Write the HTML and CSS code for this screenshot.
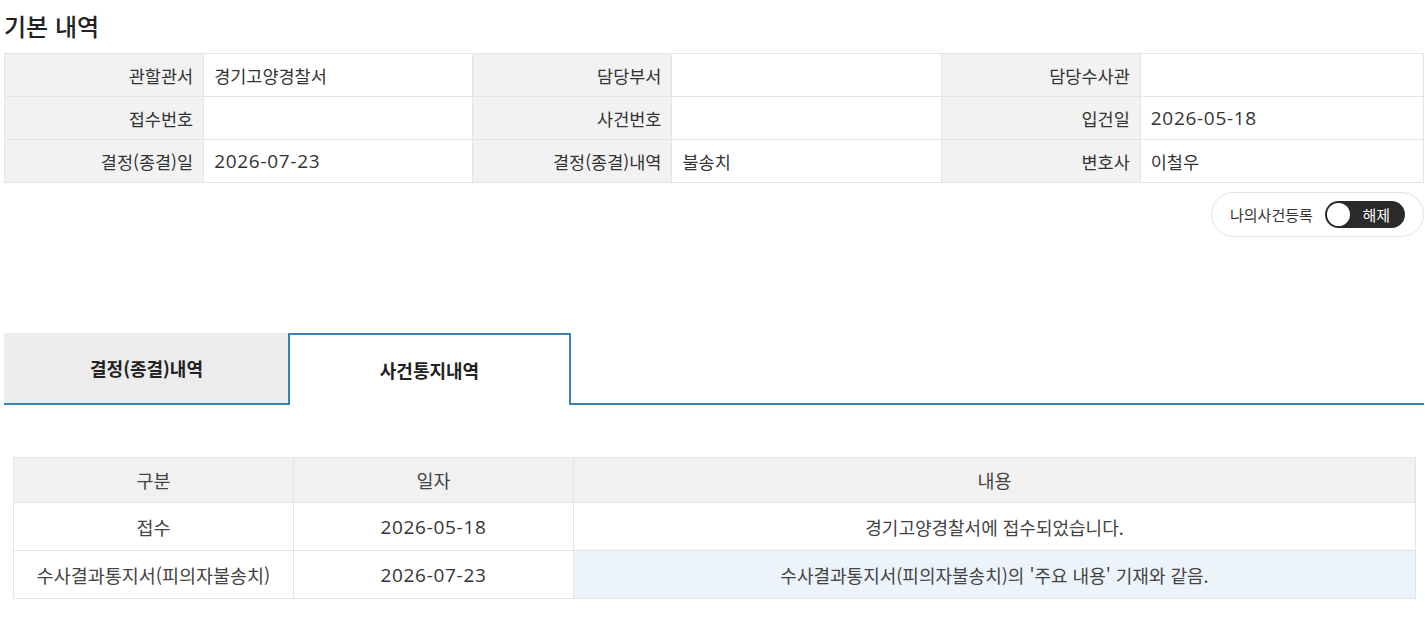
FILE: index.html
```html
<!DOCTYPE html>
<html lang="ko">
<head>
  <meta charset="UTF-8">
  <meta name="viewport" content="width=device-width, initial-scale=1.0">
  <title>사건 조회</title>
  <link rel="stylesheet" href="styles.css">
</head>
<body>

<div class="page">
  <h2 class="section-title">기본 내역</h2>

  <table class="info-table">
    <colgroup>
      <col class="col-label"><col class="col-value">
      <col class="col-label"><col class="col-value">
      <col class="col-label"><col class="col-value-wide">
    </colgroup>
    <tr>
      <th>관할관서</th><td>경기고양경찰서</td>
      <th>담당부서</th><td></td>
      <th>담당수사관</th><td></td>
    </tr>
    <tr>
      <th>접수번호</th><td></td>
      <th>사건번호</th><td></td>
      <th>입건일</th><td><span class="num">2026-05-18</span></td>
    </tr>
    <tr>
      <th>결정(종결)일</th><td><span class="num">2026-07-23</span></td>
      <th>결정(종결)내역</th><td>불송치</td>
      <th>변호사</th><td>이철우</td>
    </tr>
  </table>

  <div class="my-case">
    <div class="my-case-box">
      <span class="my-case-label">나의사건등록</span>
      <button class="switch" type="button">
        <span class="switch-knob"></span>
        <span class="switch-text">해제</span>
      </button>
    </div>
  </div>

  <div class="tabs">
    <a class="tab" href="#">결정(종결)내역</a>
    <a class="tab active" href="#">사건통지내역</a>
  </div>

  <table class="notice-table">
    <colgroup>
      <col class="col-type"><col class="col-date"><col>
    </colgroup>
    <thead>
      <tr><th>구분</th><th>일자</th><th>내용</th></tr>
    </thead>
    <tbody>
      <tr>
        <td>접수</td>
        <td><span class="num">2026-05-18</span></td>
        <td class="content">경기고양경찰서에 접수되었습니다.</td>
      </tr>
      <tr>
        <td>수사결과통지서(피의자불송치)</td>
        <td><span class="num">2026-07-23</span></td>
        <td class="content highlight">수사결과통지서(피의자불송치)의 '주요 내용' 기재와 같음.</td>
      </tr>
    </tbody>
  </table>
</div>

</body>
</html>
```

FILE: styles.css
```css
body {
  margin: 0;
  padding: 0;
  background-color: #ffffff;
  color: #333;
  font-family: "Noto Sans CJK KR", "Noto Sans", sans-serif;
}

.page {
  width: 1420px;
  padding-left: 4px;
}

.section-title {
  margin: 0;
  padding-top: 10px;
  height: 53px;
  box-sizing: border-box;
  font-size: 24px;
  font-weight: 500;
  line-height: 32px;
  color: #222;
}

/* dates and numbers use a wider latin face */
.num {
  font-family: "Open Sans", "Noto Sans", sans-serif;
  font-size: 19px;
  letter-spacing: 0.7px;
  color: #333;
}

/* basic info grid */
.info-table {
  width: 1420px;
  border-collapse: collapse;
  table-layout: fixed;
  font-size: 17.5px;
}

.info-table .col-label { width: 199px; }
.info-table .col-value { width: 269px; }
.info-table .col-value-wide { width: 283px; }

.info-table th,
.info-table td {
  height: 42px;
  padding: 0 10px;
  border: 1px solid #e4e4e4;
  font-weight: 400;
  color: #333;
}

.info-table th {
  background-color: #f2f2f2;
  text-align: right;
}

.info-table td {
  background-color: #ffffff;
  text-align: left;
}

/* my case toggle */
.my-case {
  display: flex;
  justify-content: flex-end;
  margin-top: 9px;
}

.my-case-box {
  display: flex;
  align-items: center;
  gap: 12px;
  width: 213px;
  height: 45px;
  box-sizing: border-box;
  padding: 0 18px;
  border: 1px solid #e2e2e2;
  border-radius: 23px;
  background-color: #fff;
}

.my-case-label {
  font-size: 15px;
  color: #333;
  white-space: nowrap;
}

.switch {
  display: flex;
  align-items: center;
  flex-shrink: 0;
  width: 80px;
  height: 27px;
  padding: 0 2px;
  border: none;
  border-radius: 14px;
  background-color: #2a2a2a;
  cursor: pointer;
}

.switch-knob {
  width: 23px;
  height: 23px;
  border-radius: 50%;
  background-color: #fff;
}

.switch-text {
  flex: 1;
  text-align: center;
  font-family: "Noto Sans CJK KR", sans-serif;
  font-size: 15px;
  color: #fff;
}

/* tabs */
.tabs {
  display: flex;
  margin-top: 96px;
  border-bottom: 2px solid #3684ad;
}

.tab {
  display: flex;
  align-items: center;
  justify-content: center;
  width: 285px;
  height: 70px;
  box-sizing: border-box;
  background-color: #ececec;
  color: #222;
  font-size: 18px;
  font-weight: 700;
  text-decoration: none;
}

.tab.active {
  width: 283px;
  height: 72px;
  margin-bottom: -2px;
  margin-left: -1px;
  background-color: #fff;
  border: 2px solid #3684ad;
  border-bottom: none;
}

/* notice list */
.notice-table {
  width: 1403px;
  margin: 52px 0 0 9px;
  border-collapse: collapse;
  table-layout: fixed;
  font-size: 18.5px;
}

.notice-table .col-type { width: 280px; }
.notice-table .col-date { width: 280px; }

.notice-table th,
.notice-table td {
  padding: 0;
  border: 1px solid #e3e3e3;
  text-align: center;
  color: #444;
  font-weight: 400;
}

.notice-table th {
  height: 44px;
  background-color: #f1f1f1;
}

.notice-table td {
  height: 47px;
  background-color: #fff;
}

.notice-table td.content {
  font-size: 18px;
}

.notice-table td.highlight {
  background-color: #edf3fb;
}
```
